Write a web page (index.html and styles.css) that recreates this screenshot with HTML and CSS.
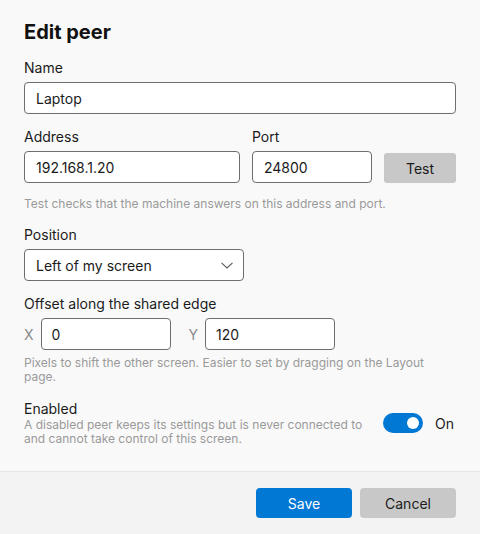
FILE: index.html
```html
<!DOCTYPE html>
<html lang="en">
<head>
<meta charset="utf-8">
<title>Edit peer</title>
<link rel="stylesheet" href="styles.css">
</head>
<body>
<div class="dialog">
  <main class="content">
    <h1 class="title">Edit peer</h1>

    <div class="field field-name">
      <label class="label">Name</label>
      <div class="input">Laptop</div>
    </div>

    <div class="row row-address">
      <div class="field field-address">
        <label class="label">Address</label>
        <div class="input">192.168.1.20</div>
      </div>
      <div class="field field-port">
        <label class="label">Port</label>
        <div class="input">24800</div>
      </div>
      <button class="btn btn-test">Test</button>
    </div>
    <p class="hint hint-address">Test checks that the machine answers on this address and port.</p>

    <div class="field field-position">
      <label class="label">Position</label>
      <div class="input select">
        <span>Left of my screen</span>
        <svg class="chevron" width="12" height="7" viewBox="0 0 12 7"><path d="M0.5 0.8 L6 6 L11.5 0.8" fill="none" stroke="#5a5a5a" stroke-width="1.1"/></svg>
      </div>
    </div>

    <div class="field field-offset">
      <label class="label">Offset along the shared edge</label>
      <div class="offset-row">
        <div class="pair"><span class="axis">X</span><div class="input small">0</div></div>
        <div class="pair"><span class="axis">Y</span><div class="input small">120</div></div>
      </div>
    </div>
    <p class="hint hint-offset">Pixels to shift the other screen. Easier to set by dragging on the Layout page.</p>

    <div class="enabled-row">
      <div class="enabled-text">
        <div class="label label-enabled">Enabled</div>
        <p class="hint hint-enabled">A disabled peer keeps its settings but is never connected to and cannot take control of this screen.</p>
      </div>
      <div class="switch-wrap">
        <span class="switch"><span class="knob"></span></span>
        <span class="switch-label">On</span>
      </div>
    </div>
  </main>
  <footer class="footer">
    <button class="btn btn-primary">Save</button>
    <button class="btn btn-secondary">Cancel</button>
  </footer>
</div>
</body>
</html>
```

FILE: styles.css
```css
* { box-sizing: border-box; }
html, body { margin: 0; padding: 0; }
body {
  font-family: Inter, "Noto Sans", "Liberation Sans", sans-serif;
  background: #f9f9f9;
  color: #1b1b1b;
  width: 480px;
  height: 534px;
  overflow: hidden;
}
.dialog {
  display: flex;
  flex-direction: column;
  height: 534px;
}
.content {
  padding: 18px 24px 0 24px;
  height: 471px;
}
.title {
  margin: 0;
  font-size: 20px;
  line-height: 28px;
  font-weight: 700;
  color: #111;
}
.field { display: flex; flex-direction: column; }
.label {
  font-size: 14px;
  line-height: 20px;
  margin-bottom: 4px;
  color: #1b1b1b;
}
.field-name { margin-top: 12px; }
.input {
  height: 32px;
  border: 1px solid #6e6e6e;
  border-radius: 4px;
  background: #fff;
  padding: 0 11px;
  font-size: 14px;
  display: flex;
  align-items: center;
  color: #1b1b1b;
}
.row-address {
  display: flex;
  align-items: flex-end;
  gap: 12px;
  margin-top: 13px;
}
.field-address { width: 216px; }
.field-port { width: 120px; }
.btn {
  font-family: inherit;
  font-size: 14px;
  border: none;
  border-radius: 4px;
  padding: 0;
  cursor: pointer;
}
.btn-test {
  width: 72px;
  height: 30px;
  background: #c8c8c8;
  color: #1b1b1b;
  border-radius: 3px;
}
.hint {
  margin: 0;
  font-size: 12px;
  line-height: 14px;
  color: #9a9a9a;
}
.hint-address { margin-top: 14px; }
.field-position { margin-top: 14px; }
.select {
  width: 220px;
  justify-content: space-between;
  padding-right: 10px;
}
.chevron { display: block; }
.field-offset { margin-top: 13px; }
.offset-row {
  display: flex;
  gap: 18px;
}
.pair {
  display: flex;
  align-items: center;
  gap: 7px;
}
.axis {
  font-size: 14px;
  color: #8a8a8a;
}
.small { width: 130px; padding-left: 10px; }
.hint-offset { margin-top: 6px; }
.enabled-row {
  display: flex;
  align-items: center;
  margin-top: 16px;
}
.enabled-text { width: 350px; }
.label-enabled {
  line-height: 18px;
  margin-bottom: 0;
}
.switch-wrap {
  display: flex;
  align-items: center;
  gap: 12px;
  margin-left: 9px;
}
.switch {
  position: relative;
  width: 40px;
  height: 20px;
  border-radius: 10px;
  background: #0078d4;
  display: block;
}
.knob {
  position: absolute;
  right: 4px;
  top: 4px;
  width: 12px;
  height: 12px;
  border-radius: 50%;
  background: #fff;
}
.switch-label { font-size: 14px; color: #1b1b1b; }
.footer {
  flex: 1;
  background: #f3f3f3;
  border-top: 1px solid #e5e5e5;
  display: flex;
  justify-content: flex-end;
  align-items: flex-start;
  gap: 8px;
  padding: 16px 24px 0 24px;
}
.btn-primary {
  width: 96px;
  height: 30px;
  background: #0078d4;
  color: #fff;
}
.btn-secondary {
  width: 96px;
  height: 30px;
  background: #c8c8c8;
  color: #1b1b1b;
}
```
